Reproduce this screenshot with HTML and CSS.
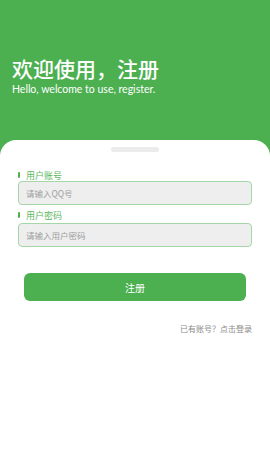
FILE: index.html
```html
<!DOCTYPE html>
<html>

<head>
    <meta charset="utf-8">
    <title>注册</title>
    <link rel="stylesheet" href="styles.css">
</head>

<body>
    <div class="header">
        <h1>欢迎使用，注册</h1>
        <p>Hello, welcome to use, register.</p>
    </div>

    <div class="card">
        <div class="handle"></div>

        <form class="form">
            <label class="label">用户账号</label>
            <input class="field" type="text" placeholder="请输入QQ号">

            <label class="label second">用户密码</label>
            <input class="field" type="password" placeholder="请输入用户密码">

            <button class="submit" type="button">注册</button>
        </form>

        <div class="login">已有账号？点击登录</div>
    </div>
</body>

</html>
```

FILE: styles.css
```css
html,
body {
    height: 100%;
}

body {
    margin: 0;
    display: flex;
    flex-direction: column;
    background: #4caf50;
    font-family: "Noto Sans CJK SC", "Noto Sans", sans-serif;
}

.header {
    height: 140px;
    box-sizing: border-box;
    padding: 53px 12px 0;
    color: #fff;
}

.header h1 {
    margin: 0;
    font-size: 21px;
    line-height: 30px;
    font-weight: 500;
}

.header p {
    margin: 0;
    font-family: Lato, "Open Sans", sans-serif;
    font-size: 10.5px;
    line-height: 13px;
}

.card {
    flex: 1;
    background: #fff;
    border-radius: 16px 16px 0 0;
    padding-top: 7px;
}

.handle {
    width: 48px;
    height: 5px;
    margin: 0 auto;
    border-radius: 3px;
    background: #ebebeb;
}

.form {
    display: flex;
    flex-direction: column;
    padding: 17px 18px 0;
}

.label {
    display: flex;
    align-items: center;
    gap: 6px;
    height: 12px;
    font-size: 9px;
    color: #5cb860;
}

.label:before {
    content: "";
    width: 2px;
    height: 6px;
    border-radius: 1px;
    background: #4caf50;
}

.label.second {
    margin-top: 4px;
    margin-bottom: 2px;
}

.field {
    height: 24px;
    box-sizing: border-box;
    padding: 0 7px;
    border: 1.5px solid #a5d6a7;
    border-radius: 4px;
    background: #eeeeee;
    font-family: inherit;
    font-size: 8.5px;
    color: #333;
    outline: none;
}

.field::placeholder {
    color: #a0a0a0;
}

.submit {
    height: 28px;
    margin: 26px 6px 0;
    border: none;
    border-radius: 6px;
    background: #4caf50;
    color: #fff;
    font-family: inherit;
    font-size: 10px;
}

.login {
    margin-top: 22px;
    padding-right: 18px;
    text-align: right;
    font-size: 8px;
    line-height: 12px;
    color: #8a8a8a;
}
```
